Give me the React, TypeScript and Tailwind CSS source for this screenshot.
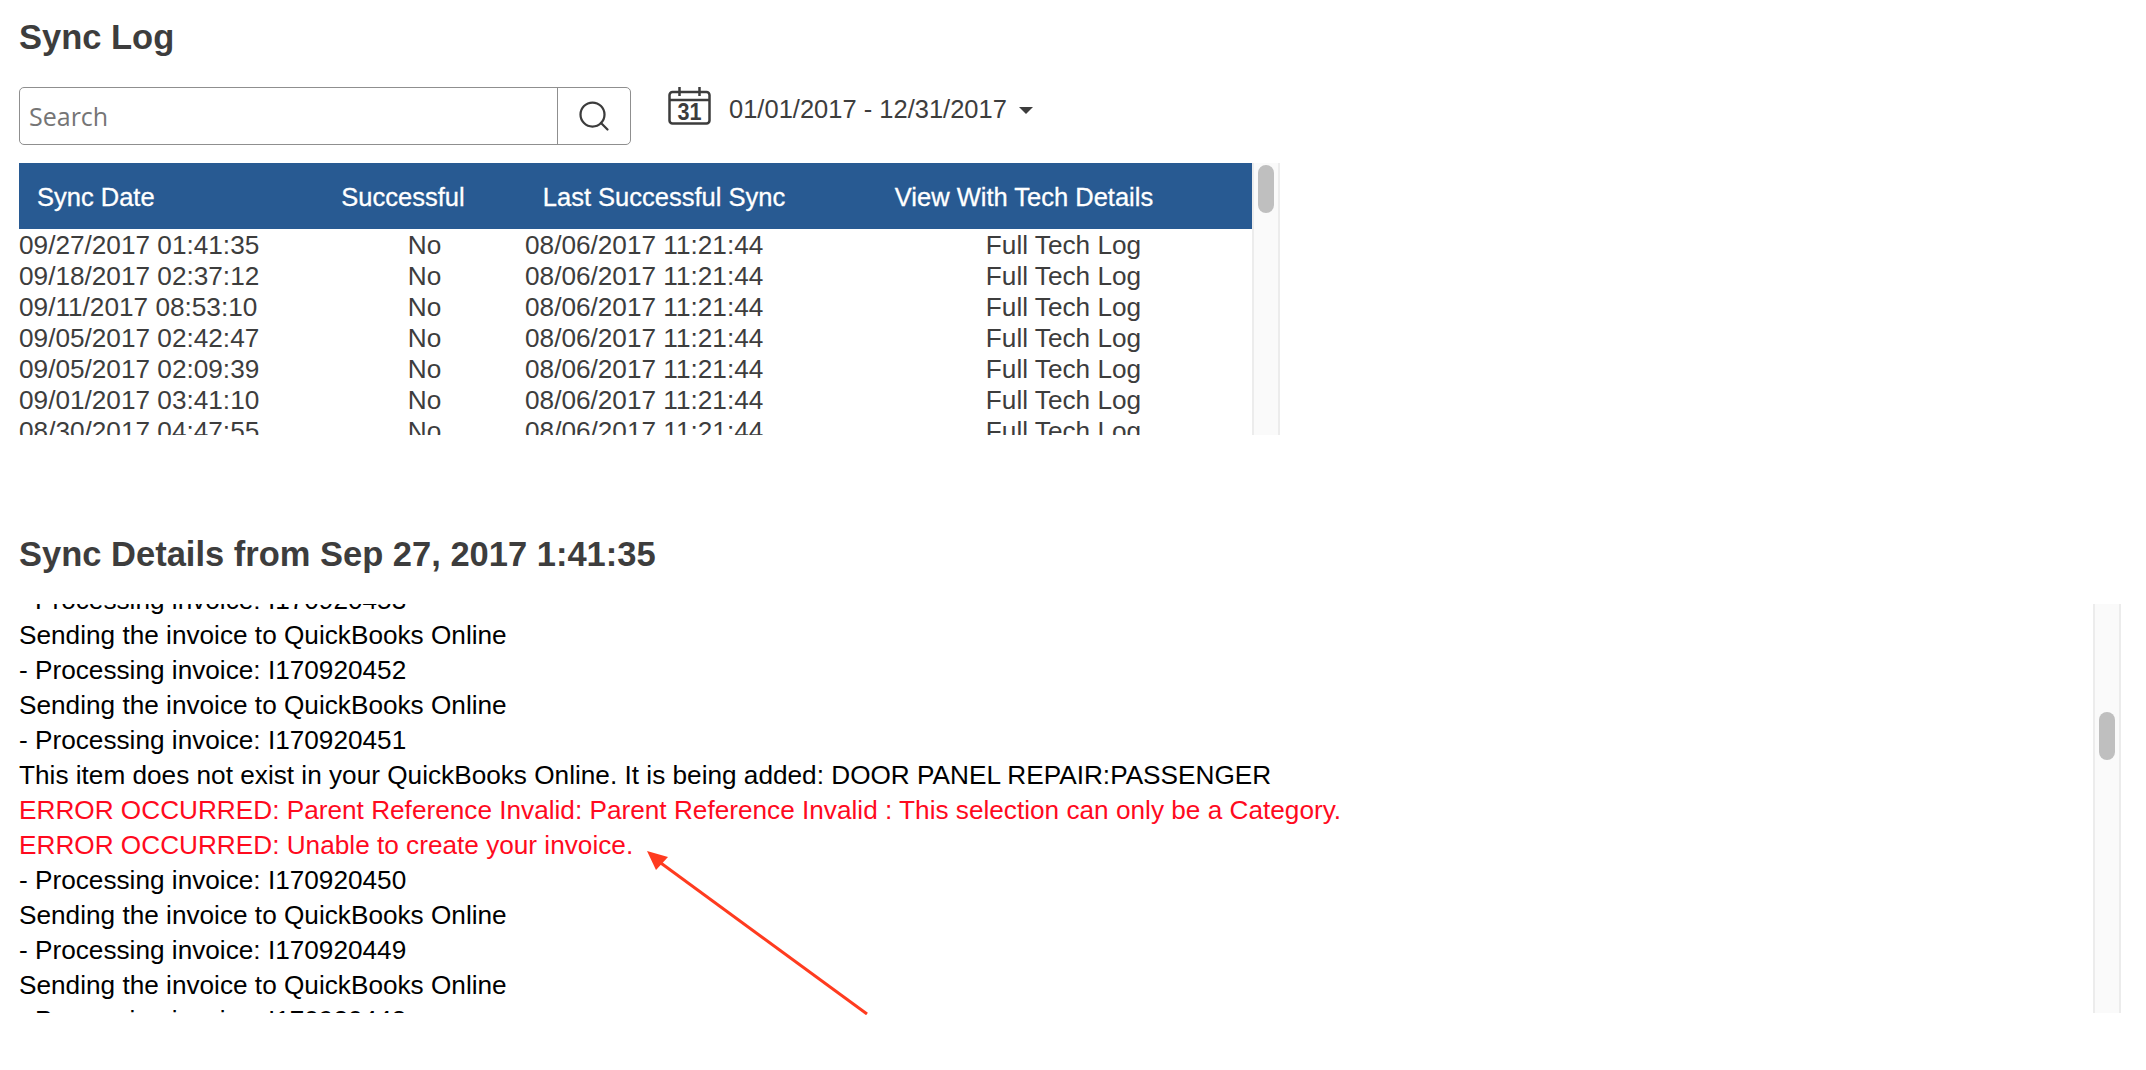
import React from 'react';
import { Search } from 'lucide-react';

const syncRows = [
  '09/27/2017 01:41:35',
  '09/18/2017 02:37:12',
  '09/11/2017 08:53:10',
  '09/05/2017 02:42:47',
  '09/05/2017 02:09:39',
  '09/01/2017 03:41:10',
  '08/30/2017 04:47:55',
];

const logLines = [
  { text: '- Processing invoice: I170920453' },
  { text: 'Sending the invoice to QuickBooks Online' },
  { text: '- Processing invoice: I170920452' },
  { text: 'Sending the invoice to QuickBooks Online' },
  { text: '- Processing invoice: I170920451' },
  { text: 'This item does not exist in your QuickBooks Online. It is being added: DOOR PANEL REPAIR:PASSENGER' },
  { text: 'ERROR OCCURRED: Parent Reference Invalid: Parent Reference Invalid : This selection can only be a Category.', error: true },
  { text: 'ERROR OCCURRED: Unable to create your invoice.', error: true },
  { text: '- Processing invoice: I170920450' },
  { text: 'Sending the invoice to QuickBooks Online' },
  { text: '- Processing invoice: I170920449' },
  { text: 'Sending the invoice to QuickBooks Online' },
  { text: '- Processing invoice: I170920448' },
];

function CalendarIcon() {
  return (
    <svg width="44" height="38" viewBox="0 0 44 38" fill="none" stroke="#3c3c3c" strokeWidth="2.5">
      <rect x="1.5" y="5" width="40" height="31.5" rx="3" />
      <path d="M2 13h39M11.5 0v9M31.5 0v9" />
      <text x="21.5" y="33" textAnchor="middle" fill="#3c3c3c" stroke="none" fontSize="24" fontWeight="700" textLength="24" lengthAdjust="spacingAndGlyphs" fontFamily="Liberation Sans, sans-serif">31</text>
    </svg>
  );
}

function Scrollbar({ thumbOffset }: { thumbOffset: string }) {
  return (
    <div className="w-[28px] shrink-0 bg-[#fafafa] border-x-2 border-[#ececec] flex justify-center">
      <div className={`w-[16px] h-[48px] rounded-full bg-[#bfbfbf] ${thumbOffset}`} />
    </div>
  );
}

export default function App() {
  return (
    <div className="w-[2146px] h-[1070px] bg-white overflow-hidden relative font-['Liberation_Sans',Arial,sans-serif]">
      <h1 className="pl-[19px] pt-[18px] h-[87px] text-[34.5px] leading-[38px] font-bold text-[#3d3d3d]">Sync Log</h1>

      <div className="pl-[19px] flex items-start h-[76px]">
        <div className="w-[612px] h-[58px] flex border border-[#8f8f8f] rounded-[5px]">
          <div className="flex-1 flex items-center pl-[9px] pt-[1px] text-[25px] text-[#757575] font-['Open_Sans',sans-serif]">Search</div>
          <div className="w-[73px] border-l border-[#8f8f8f] flex items-center justify-center">
            <Search className="w-[36px] h-[36px] text-[#3c3c3c]" strokeWidth={1.5} />
          </div>
        </div>
        <div className="ml-[37px]">
          <CalendarIcon />
        </div>
        <div className="ml-[17px] mt-[4px] flex items-center text-[25.5px] leading-[36px] text-[#3d3d3d]">
          01/01/2017 - 12/31/2017
          <span className="ml-[12px] mt-[3px] w-0 h-0 border-x-[7px] border-x-transparent border-t-[7px] border-t-[#3d3d3d]" />
        </div>
      </div>

      <div className="pl-[19px] flex h-[272px]">
        <div className="w-[1233px] overflow-hidden">
          <div className="h-[66px] pt-[2px] bg-[#285a92] grid grid-cols-[304px_160px_362px_358px] items-center text-white text-[25.5px] text-center [-webkit-text-stroke:0.3px_white]">
            <div className="pl-[18px] text-left">Sync Date</div>
            <div>Successful</div>
            <div>Last Successful Sync</div>
            <div>View With Tech Details</div>
          </div>
          <div className="pt-[1px]">
            {syncRows.map((date) => (
              <div key={date} className="h-[31px] grid grid-cols-[305px_201px_350px_377px] items-center text-[26.2px] leading-[31px] text-[#3d3d3d]">
                <div>{date}</div>
                <div className="text-center">No</div>
                <div>08/06/2017 11:21:44</div>
                <div className="text-center">Full Tech Log</div>
              </div>
            ))}
          </div>
        </div>
        <Scrollbar thumbOffset="mt-[2px]" />
      </div>

      <h2 className="pl-[19px] mt-[100px] h-[69px] text-[34.5px] leading-[38px] font-bold text-[#3d3d3d]">Sync Details from Sep 27, 2017 1:41:35</h2>

      <div className="pl-[19px] flex h-[409px] pr-[25px]">
        <div className="flex-1 overflow-hidden">
          <div className="-mt-[21px]">
            {logLines.map((line, i) => (
              <div key={i} className={`h-[35px] text-[26.2px] leading-[35px] whitespace-nowrap ${line.error ? 'text-[#ff0a1e]' : 'text-black'}`}>
                {line.text}
              </div>
            ))}
          </div>
        </div>
        <Scrollbar thumbOffset="mt-[108px]" />
      </div>

      {/* annotation arrow, clipped where the screenshot was cropped */}
      <svg className="absolute left-[640px] top-[845px]" width="240" height="170" viewBox="0 0 240 170">
        <path d="M227 169 L14 13" stroke="#ff3b1f" strokeWidth="3" fill="none" />
        <path d="M7 6 L28 12 L16 25 Z" fill="#ff3b1f" />
      </svg>
    </div>
  );
}
